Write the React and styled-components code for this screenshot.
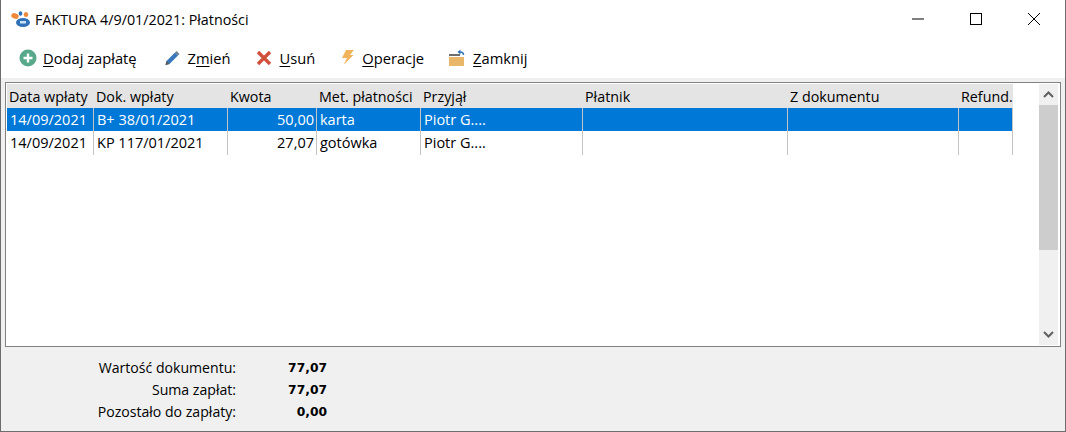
import React from 'react';
import styled, { createGlobalStyle } from 'styled-components';

const GlobalStyle = createGlobalStyle`
  html, body { margin: 0; padding: 0; background: #fff; }
  body { font-family: "Open Sans", "Noto Sans", "Liberation Sans", sans-serif; color: #000; }
`;

const COLUMNS = '87px 134px 89px 104px 162px 205px 171px 54px';

const Window = styled.div`
  box-sizing: border-box;
  width: 1066px;
  height: 432px;
  display: flex;
  flex-direction: column;
  border: 1px solid #6d6d6d;
  border-top: 0;
  background: #f0f0f0;
`;

const TitleBar = styled.div`
  height: 38px;
  display: flex;
  align-items: center;
  background: #fff;
  padding: 0 2px 0 9px;
`;

const TitleText = styled.div`
  margin-left: 4px;
  font-size: 14.3px;
  flex: 1;
`;

const WinButton = styled.div`
  width: 58px;
  height: 38px;
  display: flex;
  align-items: center;
  justify-content: center;
`;

const Toolbar = styled.div`
  box-sizing: border-box;
  height: 40px;
  display: flex;
  align-items: flex-start;
  background: #fff;
  padding: 5px 0 0 17px;
`;

const Tool = styled.div`
  display: flex;
  align-items: center;
  height: 30px;
  margin-right: ${p => p.$gap}px;
  font-size: 14.7px;
  white-space: nowrap;
  svg { margin-right: ${p => p.$iconGap}px; flex: none; }
  u { text-underline-offset: 2px; }
`;

const Body = styled.div`
  flex: 1;
  display: flex;
  flex-direction: column;
  padding: 4px 4px 0;
`;

const GridBox = styled.div`
  box-sizing: border-box;
  height: 265px;
  width: 1056px;
  border: 1px solid #828282;
  background: #fff;
  display: flex;
  padding: 1px;
`;

const GridArea = styled.div`
  flex: 1;
`;

const Row = styled.div`
  display: grid;
  grid-template-columns: ${COLUMNS};
  width: 1006px;
  height: ${p => p.$h}px;
  background: ${p => p.$bg || '#fff'};
  color: ${p => p.$color || '#000'};
  font-size: 14.5px;
`;

const HeadCell = styled.div`
  box-sizing: border-box;
  padding: 3px 0 0 2px;
  font-size: 14.3px;
  line-height: 20px;
  white-space: nowrap;
`;

const Cell = styled.div`
  box-sizing: border-box;
  padding: 0 2px 0 3px;
  line-height: 24px;
  white-space: nowrap;
  text-align: ${p => (p.$right ? 'right' : 'left')};
  border-right: 1px solid #c4c4c4;
`;

const ScrollBar = styled.div`
  width: 19px;
  margin-right: 1px;
  display: flex;
  flex-direction: column;
  background: #f0f0f0;
`;

const ScrollBtn = styled.div`
  height: 21px;
  display: flex;
  align-items: center;
  justify-content: center;
`;

const Thumb = styled.div`
  height: 145px;
  background: #cdcdcd;
`;

const Track = styled.div`
  flex: 1;
`;

const Summary = styled.div`
  display: grid;
  grid-template-columns: 231px 91px;
  grid-auto-rows: 22px;
  padding-top: 10px;
  font-size: 14.1px;
  line-height: 22px;
`;

const SumLabel = styled.div`
  text-align: right;
`;

const SumValue = styled.div`
  text-align: right;
  font-family: "DejaVu Sans", sans-serif;
  font-size: 12.3px;
  font-weight: 700;
`;

const Logo = () => (
  <svg width="21" height="18" viewBox="0 0 21 18">
    <ellipse cx="5" cy="6" rx="3.8" ry="2.7" fill="#ee8a3a" transform="rotate(20 5 6)" />
    <ellipse cx="10.5" cy="3.5" rx="1.8" ry="2.2" fill="#2f72b8" />
    <ellipse cx="16" cy="4.5" rx="2.3" ry="2.5" fill="#ee8a3a" />
    <ellipse cx="13" cy="12.5" rx="7" ry="4.5" fill="#2f72b8" />
    <rect x="10" y="11" width="6" height="2.5" fill="#cfe2f5" />
  </svg>
);

const PlusIcon = () => (
  <svg width="20" height="20" viewBox="0 0 20 20">
    <circle cx="10" cy="10" r="8.5" fill="#58a98c" />
    <path d="M10 5.5v9M5.5 10h9" stroke="#fff" strokeWidth="2.4" />
  </svg>
);

const PencilIcon = () => (
  <svg width="20" height="20" viewBox="0 0 20 20">
    <path d="M3.5 17l1-4L13 4.5 16 7.5 7.5 16z" fill="#3a78bd" />
    <path d="M3.5 17l1-4 3 3z" fill="#5a5a5a" />
    <path d="M13 4.5l1.5-1.5 3 3L16 7.5z" fill="#6f7f8f" />
  </svg>
);

const CrossIcon = () => (
  <svg width="20" height="20" viewBox="0 0 20 20">
    <path d="M4 4l12 12M16 4L4 16" stroke="#d0503c" strokeWidth="3.4" />
  </svg>
);

const BoltIcon = () => (
  <svg width="20" height="20" viewBox="0 0 20 20">
    <path d="M8 2h8l-4 5h3.5L5.5 17l3.5-7H4z" fill="#f0b45c" />
  </svg>
);

const FolderIcon = () => (
  <svg width="20" height="20" viewBox="0 0 20 20">
    <path d="M2 6h11v2H2z" fill="#6e6e6e" />
    <path d="M2 9h15v9H2z" fill="#e8b76a" />
    <path d="M16.5 7c0-2-1.5-3-3.5-3" fill="none" stroke="#2f72b8" strokeWidth="1.5" />
    <path d="M13.5 1.5L10.5 4l3 2.5z" fill="#2f72b8" />
  </svg>
);

const Chevron = ({ up }) => (
  <svg width="11" height="7" viewBox="0 0 11 7">
    <path d={up ? 'M1 6l4.5-4.5L10 6' : 'M1 1l4.5 4.5L10 1'} fill="none" stroke="#606060" strokeWidth="2" />
  </svg>
);

const headers = ['Data wpłaty', 'Dok. wpłaty', 'Kwota', 'Met. płatności', 'Przyjął', 'Płatnik', 'Z dokumentu', 'Refund.'];

const payments = [
  { date: '14/09/2021', doc: 'B+ 38/01/2021', amount: '50,00', method: 'karta', who: 'Piotr G....', selected: true },
  { date: '14/09/2021', doc: 'KP 117/01/2021', amount: '27,07', method: 'gotówka', who: 'Piotr G....' },
];

export default function App() {
  return (
    <Window>
      <GlobalStyle />
      <TitleBar>
        <Logo />
        <TitleText>FAKTURA 4/9/01/2021: Płatności</TitleText>
        <WinButton>
          <svg width="12" height="12" viewBox="0 0 12 12"><path d="M0 6h12" stroke="#000" /></svg>
        </WinButton>
        <WinButton>
          <svg width="12" height="12" viewBox="0 0 12 12"><rect x="0.5" y="0.5" width="11" height="11" fill="none" stroke="#000" /></svg>
        </WinButton>
        <WinButton>
          <svg width="12" height="12" viewBox="0 0 12 12"><path d="M0 0l12 12M12 0L0 12" stroke="#000" /></svg>
        </WinButton>
      </TitleBar>
      <Toolbar>
        <Tool $gap={25} $iconGap={5}><PlusIcon /><span><u>D</u>odaj zapłatę</span></Tool>
        <Tool $gap={23} $iconGap={6}><PencilIcon /><span>Z<u>m</u>ień</span></Tool>
        <Tool $gap={23} $iconGap={6}><CrossIcon /><span><u>U</u>suń</span></Tool>
        <Tool $gap={23} $iconGap={4}><BoltIcon /><span><u>O</u>peracje</span></Tool>
        <Tool $gap={0} $iconGap={6}><FolderIcon /><span><u>Z</u>amknij</span></Tool>
      </Toolbar>
      <Body>
        <GridBox>
          <GridArea>
            <Row $h={24} $bg="#e4e4e4">
              {headers.map(h => <HeadCell key={h}>{h}</HeadCell>)}
            </Row>
            {payments.map(p => (
              <Row key={p.doc} $h={23} $bg={p.selected ? '#0078d7' : '#fff'} $color={p.selected ? '#fff' : '#000'}>
                <Cell>{p.date}</Cell>
                <Cell>{p.doc}</Cell>
                <Cell $right>{p.amount}</Cell>
                <Cell>{p.method}</Cell>
                <Cell>{p.who}</Cell>
                <Cell />
                <Cell />
                <Cell />
              </Row>
            ))}
          </GridArea>
          <ScrollBar>
            <ScrollBtn><Chevron up /></ScrollBtn>
            <Thumb />
            <Track />
            <ScrollBtn><Chevron /></ScrollBtn>
          </ScrollBar>
        </GridBox>
        <Summary>
          <SumLabel>Wartość dokumentu:</SumLabel><SumValue>77,07</SumValue>
          <SumLabel>Suma zapłat:</SumLabel><SumValue>77,07</SumValue>
          <SumLabel>Pozostało do zapłaty:</SumLabel><SumValue>0,00</SumValue>
        </Summary>
      </Body>
    </Window>
  );
}
